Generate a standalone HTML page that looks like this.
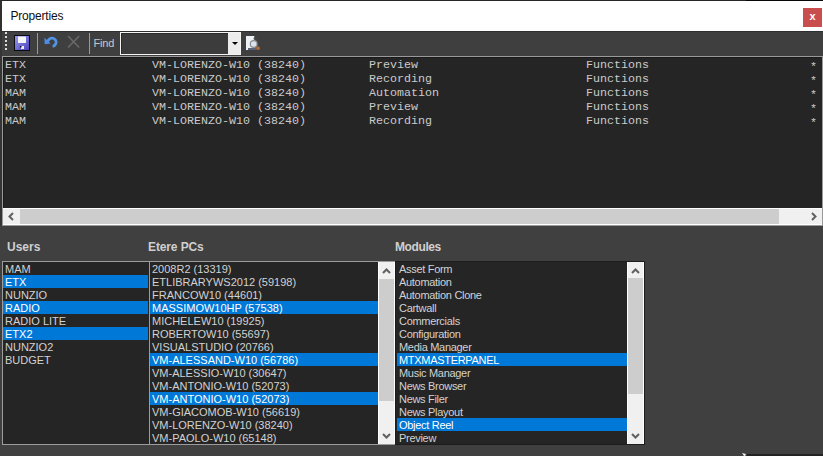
<!DOCTYPE html>
<html><head><meta charset="utf-8">
<style>
*{margin:0;padding:0;box-sizing:border-box}
html,body{width:823px;height:456px;overflow:hidden;background:#404040;font-family:"Liberation Sans",sans-serif}
.abs{position:absolute}
#title{left:0;top:0;width:823px;height:32px;background:#fff;border-top:1px solid #262626;border-left:2px solid #303030;border-bottom:1px solid #2e2e2e}
#title .t{left:8.5px;top:8px;font-size:12px;letter-spacing:-0.2px;color:#101010;white-space:nowrap}
#close{left:803px;top:8px;width:19px;height:19px;background:#c94f4f;color:#fff;font-size:11px;font-weight:bold;text-align:center;line-height:17px}
#tb{left:0;top:32px;width:823px;height:24px;background:#3f3f3f}
.grip{left:5px;width:2px;height:2px;background:#dcdcdc}
.sep{top:33px;width:1px;height:21px;background:#9a9a9a}
#find{left:93.5px;top:36.5px;font-size:11px;letter-spacing:-0.2px;color:#c8c8c8}
#combo{left:120px;top:32px;width:121px;height:23px;border:1px solid #f4f4f4;background:#3c3c3c;box-shadow:inset 1px 1px 0 #2a2a2a}
#combo .btn{right:0;top:0;width:12px;height:21px;background:#ececec}
#combo .arr{left:3.5px;top:9px;width:0;height:0;border-left:3px solid transparent;border-right:3px solid transparent;border-top:3px solid #000}
#grid{left:2px;top:56px;width:821px;height:170px;border:1px solid #9a9a9a;background:#252525}
#grid .inner{left:0;top:0;width:819px;height:151px;border-top:1px solid #1a1a1a;border-left:1px solid #1a1a1a}
.row{position:absolute;left:3px;height:14px;font-family:"Liberation Mono",monospace;font-size:11.67px;color:#cacaca;white-space:pre;line-height:14px}
#hs{left:0;top:151px;width:819px;height:17px;background:#f0f0f0;border-top:1px solid #fff;border-bottom:1px solid #fff}
.chev{position:absolute}
.lbl{font-weight:bold;font-size:12px;letter-spacing:-0.4px;color:#cfcfcf;white-space:nowrap}
.lb{border:1px solid #9c9c9c;background:#252525;overflow:hidden}
.item{position:absolute;left:0;height:13px;line-height:13px;font-size:11px;color:#d2d2d2;white-space:nowrap}
.item span{position:absolute;top:1px}
.sel{background:#0078d7;color:#fff}
.m .item{font-size:11px;letter-spacing:-0.3px}
.lb.m{border-color:#1c1c1c}
#lstrip{left:0;top:31px;width:2px;height:195px;background:#353535}
.vs{background:#f0f0f0;border-left:1px solid #fff;border-right:1px solid #fff}
</style></head><body>
<div id="title" class="abs"><div class="t abs">Properties</div></div>
<div id="close" class="abs">x</div>
<div id="tb" class="abs"></div>
<div id="lstrip" class="abs"></div>
<div class="grip abs" style="top:32px"></div>
<div class="grip abs" style="top:36px"></div>
<div class="grip abs" style="top:40px"></div>
<div class="grip abs" style="top:44px"></div>
<div class="grip abs" style="top:48px"></div>
<!-- save icon -->
<svg class="abs" style="left:14px;top:35px" width="16" height="16" viewBox="0 0 16 16">
<defs><linearGradient id="sg" x1="0" y1="0" x2="1" y2="1"><stop offset="0" stop-color="#9a9af5"/><stop offset="1" stop-color="#4b44b8"/></linearGradient></defs>
<rect x="0" y="0" width="16" height="16" fill="#0b0b14"/>
<rect x="1" y="1" width="14" height="14" fill="url(#sg)"/>
<rect x="4" y="1.5" width="8" height="6.5" fill="#f4f6f4"/>
<rect x="7" y="11" width="3" height="3" fill="#f0f0f0"/>
<rect x="6" y="11" width="1.5" height="1.5" fill="#101020"/>
</svg>
<div class="sep abs" style="left:37px"></div>
<!-- undo icon -->
<svg class="abs" style="left:43px;top:34px" width="16" height="16" viewBox="0 0 16 16">
<path d="M4.2 7.2 L5.6 6 A4.1 4.1 0 1 1 9.6 12.3" fill="none" stroke="#5293e2" stroke-width="2.8"/>
<path d="M1.4 3.8 L1.7 10.2 L7.6 9.4 Z" fill="#4d8de6"/>
</svg>
<!-- X icon -->
<svg class="abs" style="left:66px;top:34px" width="16" height="16" viewBox="0 0 16 16">
<path d="M2 2 L13.2 13.5 M13.2 2 L2 13.5" stroke="#686868" stroke-width="1.7"/>
</svg>
<div class="sep abs" style="left:89px"></div>
<div id="find" class="abs">Find</div>
<div id="combo" class="abs"><div class="btn abs"><div class="arr abs"></div></div></div>
<!-- search icon -->
<svg class="abs" style="left:243px;top:33px" width="20" height="20" viewBox="0 0 20 20">
<rect x="3" y="3" width="8.5" height="14" fill="#eef1f5"/>
<rect x="5" y="15" width="8" height="2" fill="#5a6379"/>
<path d="M11.5 3 L13 4.5 L11.5 6 Z" fill="#3a3a3a"/>
<circle cx="12.3" cy="5.6" r="1.3" fill="none" stroke="#4a4a4a" stroke-width="1"/>
<circle cx="10.7" cy="11" r="3.4" fill="#d9e4ee" stroke="#8d8d8d" stroke-width="1.2"/>
<circle cx="15" cy="15.2" r="1.9" fill="#a86c3c"/>
</svg>
<div id="grid" class="abs">
  <div class="inner abs"></div>
  <div class="row" style="left:2px;top:1px">ETX</div>
  <div class="row" style="left:149px;top:1px">VM-LORENZO-W10 (38240)</div>
  <div class="row" style="left:366px;top:1px">Preview</div>
  <div class="row" style="left:583px;top:1px">Functions</div>
  <div class="row" style="left:807px;top:2.5px">*</div>
  <div class="row" style="left:2px;top:15px">ETX</div>
  <div class="row" style="left:149px;top:15px">VM-LORENZO-W10 (38240)</div>
  <div class="row" style="left:366px;top:15px">Recording</div>
  <div class="row" style="left:583px;top:15px">Functions</div>
  <div class="row" style="left:807px;top:16.5px">*</div>
  <div class="row" style="left:2px;top:29px">MAM</div>
  <div class="row" style="left:149px;top:29px">VM-LORENZO-W10 (38240)</div>
  <div class="row" style="left:366px;top:29px">Automation</div>
  <div class="row" style="left:583px;top:29px">Functions</div>
  <div class="row" style="left:807px;top:30.5px">*</div>
  <div class="row" style="left:2px;top:43px">MAM</div>
  <div class="row" style="left:149px;top:43px">VM-LORENZO-W10 (38240)</div>
  <div class="row" style="left:366px;top:43px">Preview</div>
  <div class="row" style="left:583px;top:43px">Functions</div>
  <div class="row" style="left:807px;top:44.5px">*</div>
  <div class="row" style="left:2px;top:57px">MAM</div>
  <div class="row" style="left:149px;top:57px">VM-LORENZO-W10 (38240)</div>
  <div class="row" style="left:366px;top:57px">Recording</div>
  <div class="row" style="left:583px;top:57px">Functions</div>
  <div class="row" style="left:807px;top:58.5px">*</div>
  <div id="hs" class="abs">
    <div class="abs" style="left:17px;top:0;width:759px;height:15px;background:#cdcdcd"></div>
    <svg class="abs" style="left:4px;top:3px" width="9" height="9" viewBox="0 0 9 9"><path d="M6 1 L2.5 4.5 L6 8" fill="none" stroke="#606060" stroke-width="2"/></svg>
    <svg class="abs" style="left:806px;top:3px" width="9" height="9" viewBox="0 0 9 9"><path d="M3 1 L6.5 4.5 L3 8" fill="none" stroke="#606060" stroke-width="2"/></svg>
  </div>
</div>
<div class="lbl abs" style="left:7px;top:240px;letter-spacing:0">Users</div>
<div class="lbl abs" style="left:148px;top:239.5px;letter-spacing:-0.12px">Etere PCs</div>
<div class="lbl abs" style="left:395px;top:240px">Modules</div>
<div class="lb abs u" style="left:2px;top:261px;width:148px;height:184px">
  <div class="item" style="left:0px;top:0px;width:145px"><span style="left:2px">MAM</span></div>
  <div class="item sel" style="left:0px;top:13px;width:145px"><span style="left:2px">ETX</span></div>
  <div class="item" style="left:0px;top:26px;width:145px"><span style="left:2px">NUNZIO</span></div>
  <div class="item sel" style="left:0px;top:39px;width:145px"><span style="left:2px">RADIO</span></div>
  <div class="item" style="left:0px;top:52px;width:145px"><span style="left:2px">RADIO LITE</span></div>
  <div class="item sel" style="left:0px;top:65px;width:145px"><span style="left:2px">ETX2</span></div>
  <div class="item" style="left:0px;top:78px;width:145px"><span style="left:2px">NUNZIO2</span></div>
  <div class="item" style="left:0px;top:91px;width:145px"><span style="left:2px">BUDGET</span></div>
</div>
<div class="lb abs p" style="left:149px;top:261px;width:247px;height:184px">
  <div class="item" style="left:0px;top:0px;width:228px"><span style="left:2px">2008R2 (13319)</span></div>
  <div class="item" style="left:0px;top:13px;width:228px"><span style="left:2px">ETLIBRARYWS2012 (59198)</span></div>
  <div class="item" style="left:0px;top:26px;width:228px"><span style="left:2px">FRANCOW10 (44601)</span></div>
  <div class="item sel" style="left:0px;top:39px;width:228px"><span style="left:2px">MASSIMOW10HP (57538)</span></div>
  <div class="item" style="left:0px;top:52px;width:228px"><span style="left:2px">MICHELEW10 (19925)</span></div>
  <div class="item" style="left:0px;top:65px;width:228px"><span style="left:2px">ROBERTOW10 (55697)</span></div>
  <div class="item" style="left:0px;top:78px;width:228px"><span style="left:2px">VISUALSTUDIO (20766)</span></div>
  <div class="item sel" style="left:0px;top:91px;width:228px"><span style="left:2px">VM-ALESSAND-W10 (56786)</span></div>
  <div class="item" style="left:0px;top:104px;width:228px"><span style="left:2px">VM-ALESSIO-W10 (30647)</span></div>
  <div class="item" style="left:0px;top:117px;width:228px"><span style="left:2px">VM-ANTONIO-W10 (52073)</span></div>
  <div class="item sel" style="left:0px;top:130px;width:228px"><span style="left:2px">VM-ANTONIO-W10 (52073)</span></div>
  <div class="item" style="left:0px;top:143px;width:228px"><span style="left:2px">VM-GIACOMOB-W10 (56619)</span></div>
  <div class="item" style="left:0px;top:156px;width:228px"><span style="left:2px">VM-LORENZO-W10 (38240)</span></div>
  <div class="item" style="left:0px;top:169px;width:228px"><span style="left:2px">VM-PAOLO-W10 (65148)</span></div>
  <div class="vs abs" style="left:228px;top:0;width:17px;height:182px">
    <div class="abs" style="left:0;top:17px;width:15px;height:122px;background:#cdcdcd"></div>
    <svg class="abs" style="left:3px;top:5px" width="9" height="8" viewBox="0 0 9 8"><path d="M1 6 L4.5 2.5 L8 6" fill="none" stroke="#606060" stroke-width="2"/></svg>
    <svg class="abs" style="left:3px;top:170px" width="9" height="8" viewBox="0 0 9 8"><path d="M1 2 L4.5 5.5 L8 2" fill="none" stroke="#606060" stroke-width="2"/></svg>
  </div>
</div>
<div class="lb abs m" style="left:395px;top:261px;width:250px;height:184px">
  <div class="item" style="left:1px;top:0px;width:230px"><span style="left:2px">Asset Form</span></div>
  <div class="item" style="left:1px;top:13px;width:230px"><span style="left:2px">Automation</span></div>
  <div class="item" style="left:1px;top:26px;width:230px"><span style="left:2px">Automation Clone</span></div>
  <div class="item" style="left:1px;top:39px;width:230px"><span style="left:2px">Cartwall</span></div>
  <div class="item" style="left:1px;top:52px;width:230px"><span style="left:2px">Commercials</span></div>
  <div class="item" style="left:1px;top:65px;width:230px"><span style="left:2px">Configuration</span></div>
  <div class="item" style="left:1px;top:78px;width:230px"><span style="left:2px">Media Manager</span></div>
  <div class="item sel" style="left:1px;top:91px;width:230px"><span style="left:2px">MTXMASTERPANEL</span></div>
  <div class="item" style="left:1px;top:104px;width:230px"><span style="left:2px">Music Manager</span></div>
  <div class="item" style="left:1px;top:117px;width:230px"><span style="left:2px">News Browser</span></div>
  <div class="item" style="left:1px;top:130px;width:230px"><span style="left:2px">News Filer</span></div>
  <div class="item" style="left:1px;top:143px;width:230px"><span style="left:2px">News Playout</span></div>
  <div class="item sel" style="left:1px;top:156px;width:230px"><span style="left:2px">Object Reel</span></div>
  <div class="item" style="left:1px;top:169px;width:230px"><span style="left:2px">Preview</span></div>
  <div class="vs abs" style="left:231px;top:0;width:17px;height:182px">
    <div class="abs" style="left:0;top:16px;width:15px;height:116px;background:#cdcdcd"></div>
    <svg class="abs" style="left:3px;top:5px" width="9" height="8" viewBox="0 0 9 8"><path d="M1 6 L4.5 2.5 L8 6" fill="none" stroke="#606060" stroke-width="2"/></svg>
    <svg class="abs" style="left:3px;top:170px" width="9" height="8" viewBox="0 0 9 8"><path d="M1 2 L4.5 5.5 L8 2" fill="none" stroke="#606060" stroke-width="2"/></svg>
  </div>
</div>
<div class="abs" style="left:747px;top:454px;width:76px;height:2px;background:#232323"></div>
<svg class="abs" style="left:741px;top:453px" width="6" height="3" viewBox="0 0 6 3"><path d="M1 0 L5 1 L4 3 L3 3 Z" fill="#f0f0f0"/></svg>
<div class="abs" style="left:746px;top:0;width:77px;height:1px;background:#080808"></div>
</body></html>
